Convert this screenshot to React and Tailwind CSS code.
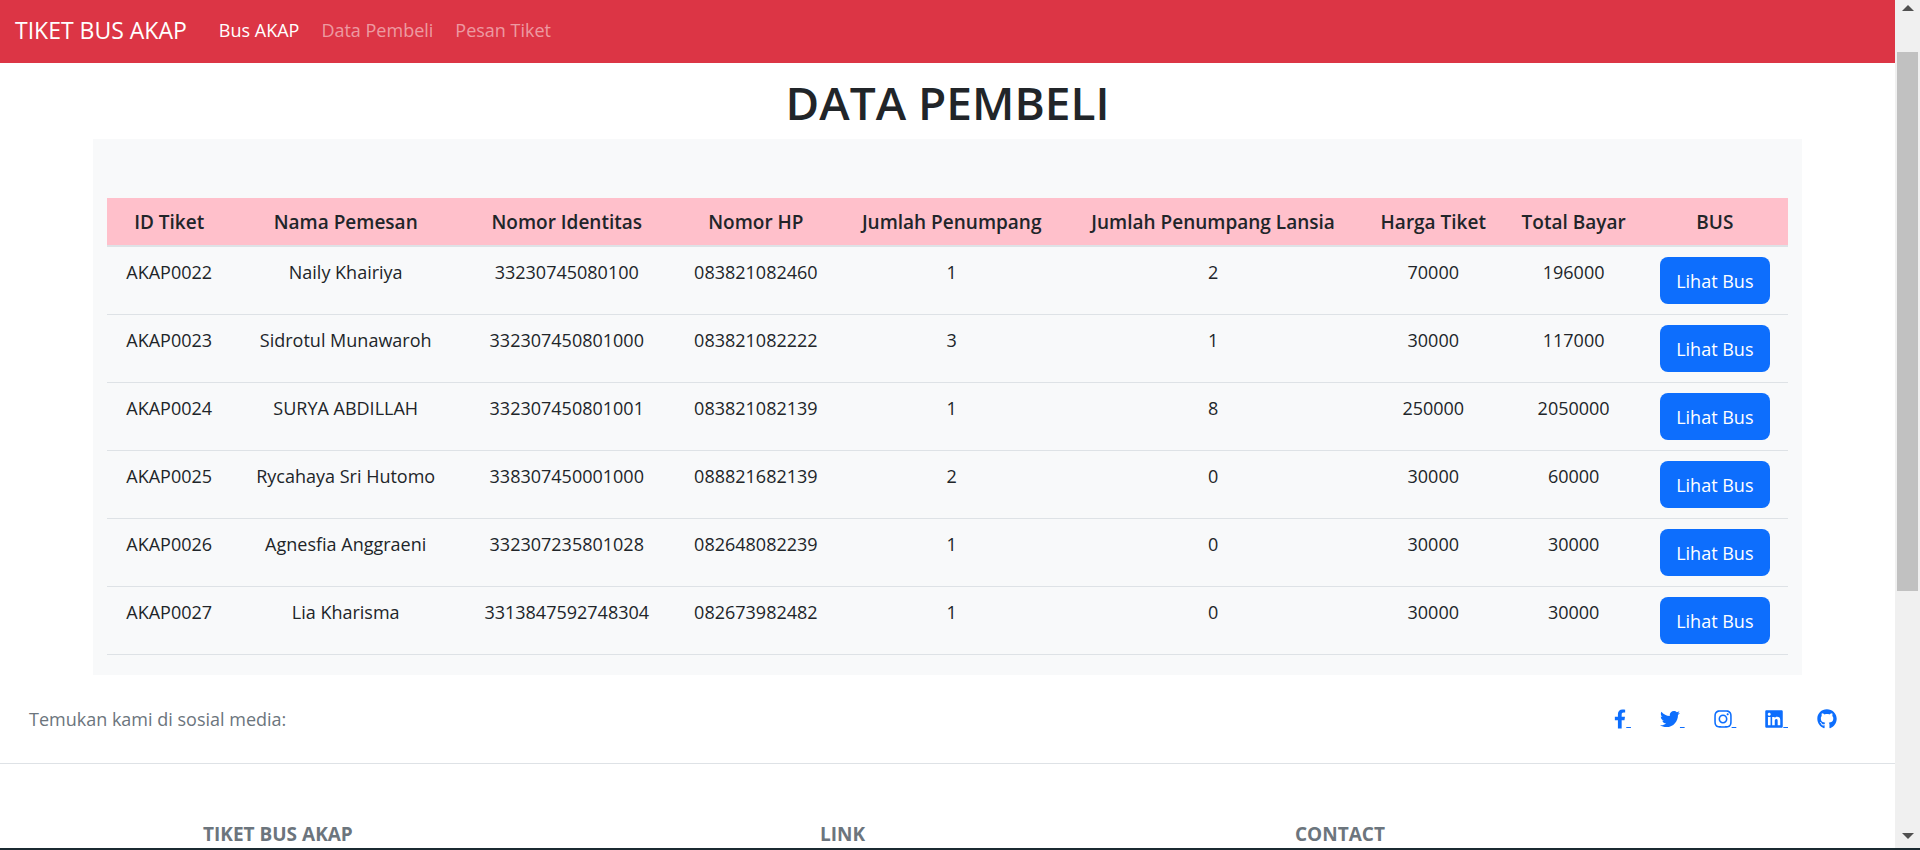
import React from "react";
import { FaFacebookF, FaTwitter, FaInstagram, FaLinkedin, FaGithub } from "react-icons/fa";

const NAV = [
  { label: "Bus AKAP", active: true },
  { label: "Data Pembeli" },
  { label: "Pesan Tiket" },
];

const COLUMNS = [
  { label: "ID Tiket", width: "w-[7.4%]" },
  { label: "Nama Pemesan", width: "w-[13.6%]" },
  { label: "Nomor Identitas", width: "w-[12.7%]" },
  { label: "Nomor HP", width: "w-[9.8%]" },
  { label: "Jumlah Penumpang", width: "w-[13.5%]" },
  { label: "Jumlah Penumpang Lansia", width: "w-[17.6%]" },
  { label: "Harga Tiket", width: "w-[8.6%]" },
  { label: "Total Bayar", width: "w-[8.1%]" },
  { label: "BUS", width: "w-[8.7%]" },
];

const ROWS = [
  ["AKAP0022", "Naily Khairiya", "33230745080100", "083821082460", "1", "2", "70000", "196000"],
  ["AKAP0023", "Sidrotul Munawaroh", "332307450801000", "083821082222", "3", "1", "30000", "117000"],
  ["AKAP0024", "SURYA ABDILLAH", "332307450801001", "083821082139", "1", "8", "250000", "2050000"],
  ["AKAP0025", "Rycahaya Sri Hutomo", "338307450001000", "088821682139", "2", "0", "30000", "60000"],
  ["AKAP0026", "Agnesfia Anggraeni", "332307235801028", "082648082239", "1", "0", "30000", "30000"],
  ["AKAP0027", "Lia Kharisma", "3313847592748304", "082673982482", "1", "0", "30000", "30000"],
];

const SOCIALS = [
  { name: "Facebook", Icon: FaFacebookF, width: "w-3" },
  { name: "Twitter", Icon: FaTwitter, width: "w-5" },
  { name: "Instagram", Icon: FaInstagram, width: "w-[18px]" },
  { name: "LinkedIn", Icon: FaLinkedin, width: "w-[18px]" },
  { name: "GitHub", Icon: FaGithub, width: "w-5", last: true },
];

function Navbar() {
  return (
    <nav className="flex h-[63px] shrink-0 items-center bg-[#dc3545] pb-1 pl-[15px]">
      <a href="#home" className="mr-8 text-[23px] leading-[30px] text-white">TIKET BUS AKAP</a>
      <div className="flex gap-[22px]">
        {NAV.map(({ label, active }) => (
          <a key={label} href="#nav" className={active ? "text-white" : "text-white/50"}>
            {label}
          </a>
        ))}
      </div>
    </nav>
  );
}

function TicketTable() {
  return (
    <table className="w-full table-fixed border-collapse text-center">
      <thead>
        <tr className="border-b-2 border-[#dee2e6] bg-[#ffc0cb]">
          {COLUMNS.map(({ label, width }) => (
            <th key={label} className={`${width} pt-[9px] pb-2 text-[19px] leading-[30px] font-semibold whitespace-nowrap`}>
              {label}
            </th>
          ))}
        </tr>
      </thead>
      <tbody>
        {ROWS.map((row) => (
          <tr key={row[0]} className="border-b border-[#dee2e6]">
            {row.map((cell, i) => (
              <td key={i} className="py-[10px] align-top whitespace-nowrap">{cell}</td>
            ))}
            <td className="py-[10px] align-top">
              <button type="button" className="mx-auto block h-[47px] w-[110px] rounded-lg bg-[#0d6efd] text-white">
                Lihat Bus
              </button>
            </td>
          </tr>
        ))}
      </tbody>
    </table>
  );
}

function Footer() {
  return (
    <footer className="text-[#6c757d]">
      <section className="flex items-center justify-between border-b border-[#dee2e6] px-[29px] py-[29px]">
        <span>Temukan kami di sosial media:</span>
        <div className="flex gap-[29px] pr-[29px] text-[#0d6efd]">
          {SOCIALS.map(({ name, Icon, width, last }) => (
            <a key={name} href="#social" aria-label={name} className="flex items-center">
              <Icon size={20} className={width} />
              {!last && <span className="underline">{"\u00a0"}</span>}
            </a>
          ))}
        </div>
      </section>
      <section className="grid grid-cols-[617fr_475fr_600fr] pt-[55px] pl-[203px] text-[19px] leading-[30px] font-bold">
        <h6>TIKET BUS AKAP</h6>
        <h6>LINK</h6>
        <h6>CONTACT</h6>
      </section>
    </footer>
  );
}

function ScrollRail() {
  return (
    <div aria-hidden="true" className="flex w-[25px] shrink-0 flex-col items-center bg-[#f0f0f0] pt-[5px] pb-[9px]">
      <svg width="12" height="6" viewBox="0 0 12 6" className="shrink-0"><path d="M6 0l6 6H0z" fill="#505050" /></svg>
      <div className="flex w-full flex-1 flex-col items-center pt-[41px]">
        <div className="h-[69%] w-[21px] bg-[#c1c1c1]" />
      </div>
      <svg width="12" height="6" viewBox="0 0 12 6" className="shrink-0"><path d="M0 0h12L6 6z" fill="#505050" /></svg>
    </div>
  );
}

export default function App() {
  return (
    <div className="flex h-screen flex-col bg-white font-['Open_Sans','Noto_Sans',sans-serif] text-[18px] leading-[30px] text-[#212529]">
      <div className="flex min-h-0 flex-1">
        <div className="min-w-0 flex-1 overflow-hidden">
          <Navbar />
          <main>
            <h1 className="pt-[9px] pb-[7px] text-center text-[46px] leading-[60px] font-semibold">DATA PEMBELI</h1>
            <div className="mx-[93px] bg-[#f8f9fa] px-[14px] pt-[59px] pb-5">
              <TicketTable />
            </div>
          </main>
          <Footer />
        </div>
        <ScrollRail />
      </div>
      <div className="h-0.5 shrink-0 bg-[#1b2a31]" />
    </div>
  );
}
